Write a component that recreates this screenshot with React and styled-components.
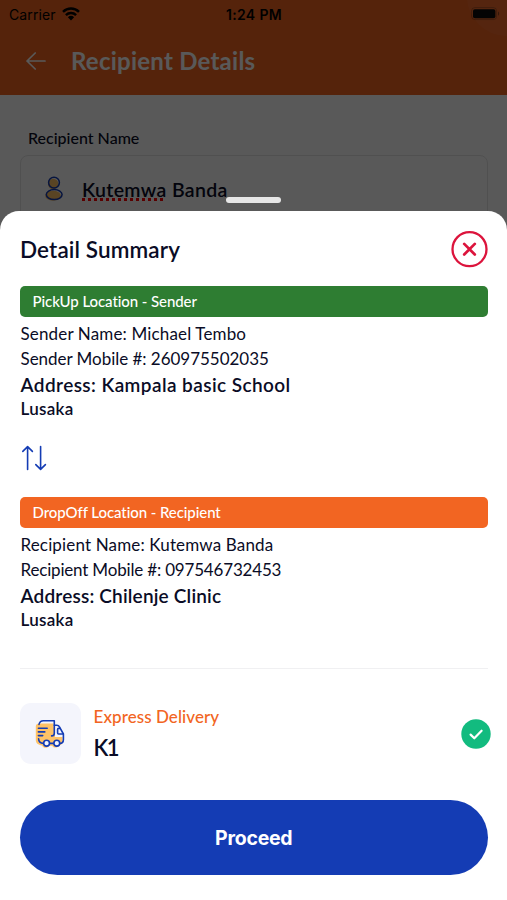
import React, { useState } from "react";
import styled, { createGlobalStyle } from "styled-components";

const App = () => {
  const [stops] = useState([
    {
      banner: "PickUp Location - Sender",
      color: "#2e7d32",
      name: "Sender Name: Michael Tembo",
      mobile: "Sender Mobile #: 260975502035",
      mobileSpacing: "-0.03px",
      address: "Address: Kampala basic School",
      addressSpacing: "0.42px",
      city: "Lusaka",
    },
    {
      banner: "DropOff Location - Recipient",
      color: "#f26522",
      name: "Recipient Name: Kutemwa Banda",
      mobile: "Recipient Mobile #: 097546732453",
      mobileSpacing: "-0.18px",
      address: "Address: Chilenje Clinic",
      addressSpacing: "0.18px",
      city: "Lusaka",
    },
  ]);

  return (
    <Screen>
      <GlobalStyle />
      <TopArea>
        <Glow />
        <StatusBar>
          <Carrier>
            <span>Carrier</span>
            <WifiIcon />
          </Carrier>
          <Clock>1:24 PM</Clock>
          <BatterySlot>
            <BatteryIcon />
          </BatterySlot>
        </StatusBar>
        <Header>
          <BackIcon />
          <HeaderTitle>Recipient Details</HeaderTitle>
        </Header>
      </TopArea>
      <Form>
        <Label>Recipient Name</Label>
        <Field>
          <PersonIcon />
          <FieldValue>
            <Misspelled>Kutemwa</Misspelled> Banda
          </FieldValue>
        </Field>
      </Form>
      <Overlay>
        <Handle />
        <Sheet>
          <SheetHeader>
            <SheetTitle>Detail Summary</SheetTitle>
            <CloseIcon />
          </SheetHeader>
          <Stop stop={stops[0]} />
          <SwapRow>
            <SwapIcon />
          </SwapRow>
          <Stop stop={stops[1]} />
          <Divider />
          <Delivery>
            <TruckBox>
              <TruckIcon />
            </TruckBox>
            <DeliveryInfo>
              <DeliveryName>Express Delivery</DeliveryName>
              <Price>K1</Price>
            </DeliveryInfo>
            <CheckIcon />
          </Delivery>
          <Proceed>Proceed</Proceed>
        </Sheet>
      </Overlay>
    </Screen>
  );
};

const Stop = ({ stop }) => (
  <section>
    <Banner $color={stop.color}>{stop.banner}</Banner>
    <Lines>
      <Line $spacing="0.15px">{stop.name}</Line>
      <Line $spacing={stop.mobileSpacing}>{stop.mobile}</Line>
      <Address $spacing={stop.addressSpacing}>{stop.address}</Address>
      <City>{stop.city}</City>
    </Lines>
  </section>
);

const WifiIcon = () => (
  <svg width="18" height="14" viewBox="0 0 18 14" fill="none" stroke="#000" strokeWidth="2.5">
    <path d="M1 4.8a11.6 11.6 0 0 1 16 0" />
    <path d="M3.9 8.1a7.4 7.4 0 0 1 10.2 0" />
    <path d="M9 13.4 5.9 10.2a4.5 4.5 0 0 1 6.2 0z" fill="#000" stroke="none" />
  </svg>
);

const BatteryIcon = () => (
  <svg width="29" height="14" viewBox="0 0 29 14">
    <rect x="0.6" y="0.6" width="25" height="12" rx="3.2" fill="none" stroke="#000" strokeOpacity="0.25" />
    <rect x="2" y="2.2" width="22.4" height="9" rx="1.8" fill="#000" />
    <path d="M27 4.6c1.6.6 1.6 3.6 0 4.2z" fill="#000" fillOpacity="0.4" />
  </svg>
);

const BackIcon = () => (
  <svg width="20" height="18" viewBox="0 0 20 18" fill="none" stroke="#fff" strokeWidth="1.7" strokeLinecap="round" strokeLinejoin="round">
    <path d="M9.2 1 1 9l8.2 8M1 9h18" />
  </svg>
);

const PersonIcon = () => (
  <svg width="20" height="26" viewBox="0 0 20 26">
    <circle cx="9.2" cy="8" r="5.2" fill="#ffc267" />
    <ellipse cx="9" cy="19.8" rx="7.8" ry="5" fill="#ffc267" />
    <circle cx="10" cy="6.6" r="5.4" fill="none" stroke="#143cb4" strokeWidth="1.5" />
    <ellipse cx="10.2" cy="18.6" rx="7.9" ry="5" fill="none" stroke="#143cb4" strokeWidth="1.5" />
  </svg>
);

const CloseIcon = () => (
  <svg width="37" height="37" viewBox="0 0 37 37" fill="none" stroke="#dc143c">
    <circle cx="18.5" cy="18.2" r="17" strokeWidth="2.3" />
    <path d="m13.2 12.9 10.6 10.6M23.8 12.9 13.2 23.5" strokeWidth="2.7" strokeLinecap="round" />
  </svg>
);

const SwapIcon = () => (
  <svg width="26" height="26" viewBox="0 0 26 26" fill="none" stroke="#143cb4" strokeWidth="1.6" strokeLinecap="round" strokeLinejoin="round">
    <path d="M6.6 24.4V2M1.8 6.4 6.6 1.6l4.800 4.800" />
    <path d="M19.600 1.6V24M14.800 19.600l4.800 4.800 4.800-4.800" />
  </svg>
);

const TruckIcon = () => (
  <svg width="30" height="30" viewBox="0 0 30 30" fill="none" strokeLinecap="round" strokeLinejoin="round">
    <path
      d="M4 4.5h14.5v4h4.5l4.5 6v8.5c0 2-1.5 3-3.5 3.5-1 2.6-5.500 2.900-6.800.2h-3.200c-1.200 2.900-5.800 2.700-6.900-.2C3 25.900.8 24 .8 21V7.500c0-1.800 1.400-3 3.200-3z"
      fill="#ffc267"
    />
    <path d="M20 7h3l5.400 8v3H20z" fill="#f4f5fc" />
    <g stroke="#143cb4" strokeWidth="1.6">
      <path d="M4 5.400c.5-2.200 2-3.600 4.400-3.600h10.900v12.400c0 1.600-1 2.700-2.700 2.700" />
      <path d="M19.300 6.200h2.500c1.100 0 2 .5 2.500 1.500l4.100 7.300v5.500c0 2.500-1.300 3.900-3.500 3.900M14.900 24.400h4M8.300 24.400c-2.900 0-4.700-1.700-4.700-4.600" />
      <path d="M24.800 9.400h-1.200c-.7 0-1 .4-1 1v3.600c0 .7.400 1 1 1h4.600" />
      <path d="M3.400 9.200h8.800M3.400 12.900h6.400M3.400 16.600h4.300" />
      <circle cx="11.600" cy="24.200" r="2.900" fill="#f4f5fc" />
      <circle cx="21.800" cy="24.200" r="2.900" fill="#f4f5fc" />
    </g>
  </svg>
);

const CheckIcon = () => (
  <svg width="30" height="30" viewBox="0 0 30 30" fill="none">
    <circle cx="15" cy="15" r="14.7" fill="#12bb7f" />
    <path d="m9.6 15.600 3.700 3.700 7.300-7.600" stroke="#fff" strokeWidth="2.2" strokeLinecap="round" strokeLinejoin="round" />
  </svg>
);

const GlobalStyle = createGlobalStyle`
  * {
    margin: 0;
    padding: 0;
    box-sizing: border-box;
  }
  body {
    font-family: Lato, "Liberation Sans", sans-serif;
    color: #0a0c26;
    background: #fff;
  }
  svg {
    display: block;
    flex-shrink: 0;
  }
`;

const Screen = styled.div`
  position: relative;
  width: 507px;
  height: 900px;
  overflow: hidden;
  background: #fff;
`;

const TopArea = styled.div`
  position: relative;
  height: 95px;
  overflow: hidden;
  background: #f26522;
`;

const Glow = styled.div`
  position: absolute;
  top: -44px;
  right: -40px;
  width: 80px;
  height: 80px;
  border-radius: 50%;
  background: rgba(255, 255, 255, 0.05);
`;

const StatusBar = styled.div`
  display: grid;
  grid-template-columns: 1fr auto 1fr;
  align-items: center;
  height: 28px;
  padding: 0 7px 0 9px;
  font-family: Inter, sans-serif;
  font-size: 14px;
  color: #000;
`;

const Carrier = styled.div`
  display: flex;
  align-items: center;
  gap: 6px;
  letter-spacing: 0.1px;
`;

const Clock = styled.span`
  margin-right: 1px;
  font-weight: 600;
  letter-spacing: 0.35px;
`;

const BatterySlot = styled.div`
  display: flex;
  justify-content: flex-end;
`;

const Header = styled.header`
  display: flex;
  align-items: center;
  gap: 25px;
  height: 65px;
  padding-left: 26px;
  color: #fff;
`;

const HeaderTitle = styled.h1`
  font-size: 24px;
  font-weight: 700;
  line-height: 30px;
  letter-spacing: 0.24px;
`;

const Form = styled.div`
  padding: 32px 19px 0 20px;
`;

const Label = styled.label`
  display: block;
  padding-left: 8px;
  font-size: 16px;
  font-weight: 500;
  line-height: 21px;
`;

const Field = styled.div`
  display: flex;
  align-items: center;
  gap: 18px;
  height: 68px;
  margin-top: 7px;
  padding-left: 23px;
  border: 1px solid #e6e6e6;
  border-radius: 8px;
`;

const FieldValue = styled.span`
  font-size: 19.5px;
  font-weight: 600;
  letter-spacing: 0.34px;
`;

const Misspelled = styled.span`
  text-decoration: underline dotted #f00 2.5px;
  text-decoration-skip-ink: none;
  text-underline-offset: 1px;
`;

const Overlay = styled.div`
  position: absolute;
  inset: 0;
  display: flex;
  flex-direction: column;
  align-items: center;
  padding-top: 197px;
  background: rgba(0, 0, 0, 0.65);
`;

const Handle = styled.div`
  flex-shrink: 0;
  width: 55px;
  height: 6px;
  border-radius: 3px;
  background: #e6e6e6;
`;

const Sheet = styled.main`
  flex: 1;
  width: 100%;
  margin-top: 8px;
  padding: 20px 19.5px 0 20px;
  border-radius: 19px 19px 0 0;
  background: #fff;
`;

const SheetHeader = styled.div`
  display: flex;
  align-items: center;
  justify-content: space-between;
  height: 37px;
  margin-bottom: 18px;
`;

const SheetTitle = styled.h2`
  font-size: 22.5px;
  font-weight: 600;
  line-height: 36px;
  letter-spacing: 0.12px;
`;

const Banner = styled.div`
  height: 31px;
  padding-left: 12.5px;
  border-radius: 5px;
  background: ${(props) => props.$color};
  color: #fff;
  font-size: 15px;
  font-weight: 500;
  line-height: 31px;
  letter-spacing: -0.08px;
`;

const Lines = styled.div`
  padding: 4px 0 0 0.5px;
`;

const Line = styled.p`
  font-size: 17px;
  line-height: 25px;
  letter-spacing: ${(props) => props.$spacing};
`;

const Address = styled.p`
  font-size: 19px;
  font-weight: 600;
  line-height: 28px;
  letter-spacing: ${(props) => props.$spacing};
`;

const City = styled.p`
  font-size: 17px;
  font-weight: 600;
  line-height: 19px;
  letter-spacing: 0.3px;
`;

const SwapRow = styled.div`
  display: flex;
  height: 79px;
  padding: 27px 0 0 1px;
`;

const Divider = styled.hr`
  margin-top: 39px;
  border: 0;
  border-top: 1px solid #f0f0f2;
`;

const Delivery = styled.div`
  display: flex;
  align-items: center;
  height: 61px;
  margin-top: 34px;
  margin-right: -3px;
`;

const TruckBox = styled.div`
  display: flex;
  align-items: center;
  justify-content: center;
  width: 61px;
  height: 61px;
  padding-right: 2px;
  border-radius: 11px;
  background: #f4f5fc;
`;

const DeliveryInfo = styled.div`
  flex: 1;
  margin-left: 12.5px;
`;

const DeliveryName = styled.p`
  color: #f26522;
  font-size: 17px;
  font-weight: 500;
  line-height: 28px;
  letter-spacing: 0.07px;
`;

const Price = styled.p`
  font-size: 22px;
  font-weight: 600;
  line-height: 34px;
  letter-spacing: -1.5px;
`;

const Proceed = styled.button`
  display: block;
  width: 100%;
  height: 75px;
  margin-top: 36px;
  border: 0;
  border-radius: 38px;
  background: #143cb4;
  color: #fff;
  font-family: Inter, sans-serif;
  font-size: 19.5px;
  font-weight: 700;
  letter-spacing: -0.25px;
`;

export default App;
